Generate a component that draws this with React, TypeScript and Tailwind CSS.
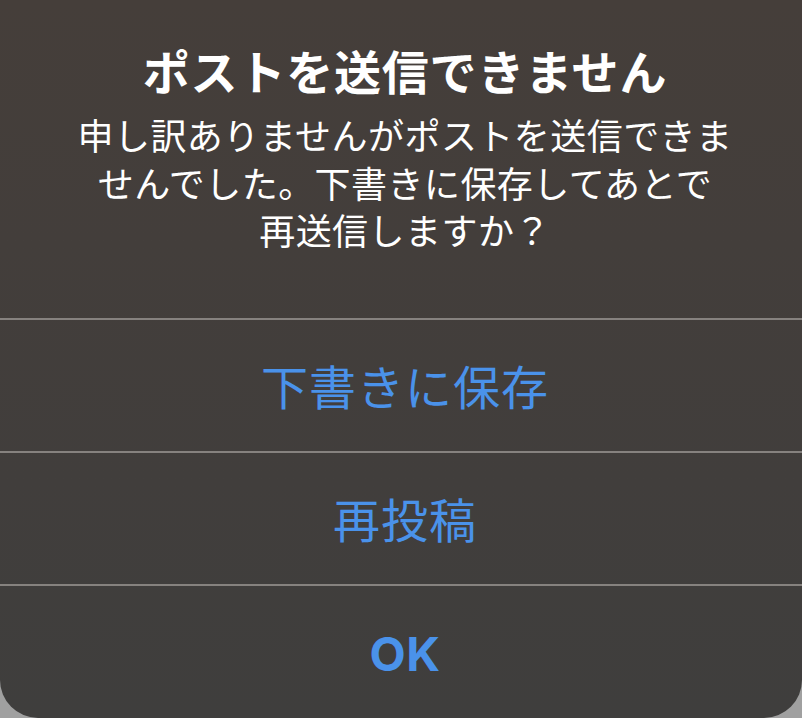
import React from 'react'

const font = { fontFamily: 'Inter, "Noto Sans CJK JP", sans-serif' }

function AlertButton({ label, bold = false }: { label: string; bold?: boolean }) {
  return (
    <div className="flex h-[133px] items-center justify-center border-t-2 border-[#86827f] pl-[8px]">
      <span
        className={`pt-[3px] text-[47px] leading-none text-[#4a92ea] ${bold ? 'font-bold tracking-[0.5px]' : 'font-normal tracking-[1px]'}`}
      >
        {label}
      </span>
    </div>
  )
}

export default function App() {
  return (
    <div className="h-[718px] w-[802px] overflow-hidden bg-[#a0a0a0]" style={font}>
      <div className="flex h-[718px] w-full flex-col overflow-hidden rounded-b-[38px] bg-gradient-to-b from-[#453e3a] to-[#3f3e3d]">
        <div className="flex h-[318px] flex-col items-center pl-[8px] pt-[45px] text-center text-white">
          <h1 className="text-[47px] font-bold leading-[56px] tracking-[0.8px]">ポストを送信できません</h1>
          <p className="mt-[13px] whitespace-nowrap text-[36px] leading-[47.5px] tracking-[0.45px]">
            申し訳ありませんがポストを送信できま
            <br />
            せんでした。下書きに保存してあとで
            <br />
            再送信しますか？
          </p>
        </div>
        <AlertButton label="下書きに保存" />
        <AlertButton label="再投稿" />
        <AlertButton label="OK" bold />
      </div>
    </div>
  )
}
